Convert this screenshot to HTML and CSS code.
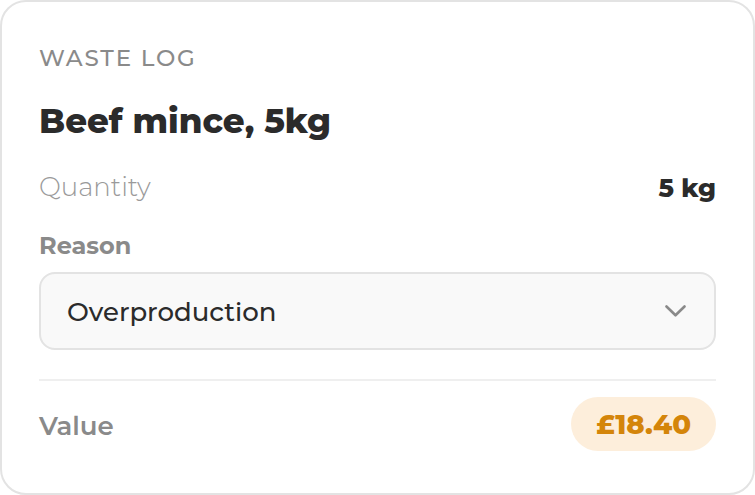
FILE: index.html
```html
<!DOCTYPE html>
<html lang="en">
<head>
<meta charset="utf-8">
<title>Waste log</title>
<link rel="stylesheet" href="styles.css">
</head>
<body>
<div class="card">
  <div class="eyebrow">WASTE LOG</div>
  <h1 class="title">Beef mince, 5kg</h1>
  <div class="row qty">
    <span class="qty-label">Quantity</span>
    <span class="qty-value">5 kg</span>
  </div>
  <div class="field-label">Reason</div>
  <div class="select">
    <span class="select-text">Overproduction</span>
    <svg class="chevron" width="21" height="12" viewBox="0 0 21 12"><polyline points="1.5,1.5 10.5,10.3 19.5,1.5" fill="none" stroke="#8a8a8a" stroke-width="2.6" stroke-linecap="round" stroke-linejoin="round"/></svg>
  </div>
  <div class="divider"></div>
  <div class="row value-row">
    <span class="value-label">Value</span>
    <span class="pill">£18.40</span>
  </div>
</div>
</body>
</html>
```
FILE: styles.css
```css
* { box-sizing: border-box; }
html, body { margin: 0; padding: 0; background: #ffffff; }
body {
  font-family: "Montserrat", Inter, "Noto Sans", sans-serif;
  width: 755px;
  height: 495px;
}
.card {
  width: 755px;
  height: 495px;
  border: 2px solid #e3e3e3;
  border-radius: 26px;
  padding: 37px 37px 0 37px;
  display: flex;
  flex-direction: column;
  background: #fff;
}
.eyebrow {
  font-size: 23px;
  line-height: 38px;
  font-weight: 500;
  letter-spacing: 1.8px;
  color: #8a8a8a;
}
.title {
  margin: 24px 0 0 0;
  font-size: 34px;
  line-height: 40px;
  font-weight: 800;
  color: #2b2b2b;
}
.row {
  display: flex;
  justify-content: space-between;
  align-items: center;
}
.qty {
  margin-top: 28px;
  height: 36px;
}
.qty-label {
  font-size: 26px;
  font-weight: 300;
  color: #9a9a9a;
}
.qty-value {
  font-size: 25.5px;
  font-weight: 800;
  color: #2b2b2b;
}
.field-label {
  margin-top: 26px;
  font-size: 24px;
  line-height: 30px;
  font-weight: 700;
  color: #8a8a8a;
}
.select {
  margin-top: 11px;
  height: 78px;
  border: 2px solid #e3e3e3;
  border-radius: 16px;
  background: #f9f9f9;
  display: flex;
  align-items: center;
  justify-content: space-between;
  padding: 0 28px 0 26px;
}
.select-text {
  padding-top: 2px;
  font-size: 26px;
  font-weight: 500;
  color: #2b2b2b;
}
.chevron { display: block; }
.divider {
  margin-top: 29px;
  height: 2px;
  background: #efefef;
}
.value-row {
  margin-top: 16px;
}
.value-label {
  padding-top: 3px;
  font-size: 26px;
  font-weight: 600;
  color: #8a8a8a;
}
.pill {
  height: 54px;
  padding: 0 25px;
  border-radius: 27px;
  background: #fdeedb;
  color: #d4850a;
  font-size: 27.5px;
  font-weight: 800;
  display: flex;
  align-items: center;
}
```
